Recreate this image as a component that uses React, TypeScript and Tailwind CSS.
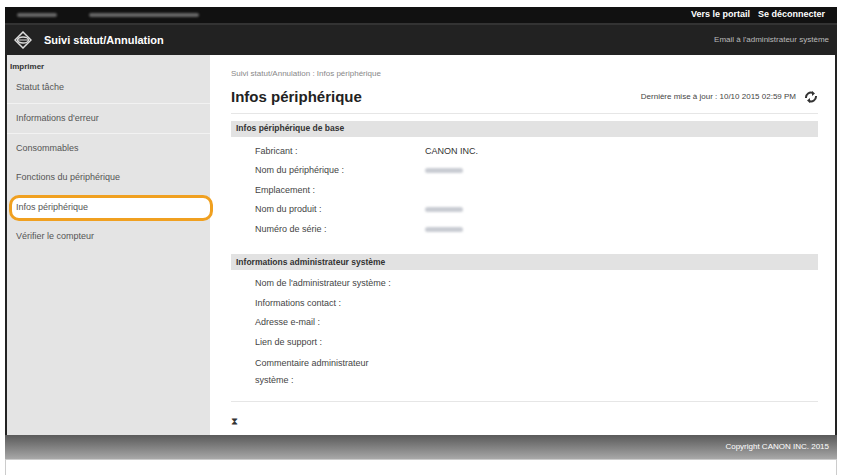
const font = { fontFamily: '"Liberation Sans", Arial, sans-serif' }

const sideItems = [
  'Statut tâche',
  "Informations d'erreur",
  'Consommables',
  'Fonctions du périphérique',
  'Infos périphérique',
  'Vérifier le compteur',
]

function Row({ label, value, blur }: { label: string; value?: string; blur?: boolean }) {
  return (
    <div className="flex h-[19.5px] items-center pl-6 text-[9px] text-[#444]">
      <div className="w-[170px]">{label}</div>
      {value && <div className="text-[#333]">{value}</div>}
      {blur && <div className="h-[5px] w-[38px] rounded bg-[#c9ccd3] blur-[1px]" />}
    </div>
  )
}

function Logo() {
  return (
    <svg width="18" height="18" viewBox="0 0 18 18">
      <path d="M9 1 L17 9 L9 17 L1 9 Z" fill="none" stroke="#ddd" strokeWidth="1.5" />
      <ellipse cx="9" cy="9" rx="5.5" ry="3" fill="none" stroke="#ddd" strokeWidth="1.3" />
      <path d="M4 9 H14" stroke="#ddd" strokeWidth="1" />
    </svg>
  )
}

export default function App() {
  return (
    <div style={font} className="h-[475px] w-[842px] bg-white pt-[7px]">
      <div className="mx-[5px] flex h-[468px] flex-col">
        <div className="flex h-[16px] items-center justify-between bg-[#111] px-3">
          <div className="flex gap-8">
            <div className="h-[4px] w-[40px] rounded bg-[#666] blur-[1px]" />
            <div className="h-[4px] w-[110px] rounded bg-[#666] blur-[1px]" />
          </div>
          <div className="flex gap-2 text-[9px] font-bold text-white">
            <span>Vers le portail</span>
            <span>Se déconnecter</span>
          </div>
        </div>
        <div className="flex h-[32px] items-center justify-between border-t-2 border-[#333] bg-[#222] pl-[9px] pr-2">
          <div className="flex items-center gap-3">
            <Logo />
            <span className="text-[11px] font-bold text-white">Suivi statut/Annulation</span>
          </div>
          <span className="text-[8px] text-[#bbb]">Email à l'administrateur système</span>
        </div>
        <div className="flex h-[380px] border-l-2 border-r-2 border-[#222]">
          <div className="w-[203px] bg-[#e4e4e4] pt-[6px]">
            <div className="pl-[3px] text-[8px] font-bold text-[#333]">Imprimer</div>
            {sideItems.map((s, i) => (
              <div key={s} className={`relative flex items-center pl-[9px] text-[9px] text-[#555] ${i === 0 ? 'h-[31px]' : 'h-[29.5px]'} ${i < 2 ? 'border-b border-[#f2f2f2]' : ''}`}>
                {i === 4 && <div className="absolute left-[2px] right-[-3px] top-[2px] bottom-[1px] rounded-[10px] border-[3px] border-[#f0a020] bg-white" />}
                <span className="relative">{s}</span>
              </div>
            ))}
          </div>
          <div className="flex-1 bg-white pl-[21px] pr-[17px] pt-[13px]">
            <div className="text-[8px] text-[#888]">Suivi statut/Annulation : Infos périphérique</div>
            <div className="flex items-center justify-between border-b border-[#e6e6e6] pb-[4px] pt-[6px]">
              <span className="text-[15px] font-bold text-[#222]">Infos périphérique</span>
              <div className="flex items-center gap-2 text-[8px] text-[#444]">
                <span>Dernière mise à jour : 10/10 2015 02:59 PM</span>
                <svg width="14" height="12" viewBox="0 0 14 12">
                  <path d="M2 7 A5 5 0 0 1 9 2" fill="none" stroke="#333" strokeWidth="2" />
                  <path d="M8 0 L11 2.5 L8 5 Z" fill="#333" />
                  <path d="M12 5 A5 5 0 0 1 5 10" fill="none" stroke="#333" strokeWidth="2" />
                  <path d="M6 7 L3 9.5 L6 12 Z" fill="#333" />
                </svg>
              </div>
            </div>
            <div className="mt-[7px] flex h-[16px] items-center bg-[#e2e2e2] pl-[5px] text-[8.5px] font-bold text-[#333]">Infos périphérique de base</div>
            <div className="pt-[5px]">
              <Row label="Fabricant :" value="CANON INC." />
              <Row label="Nom du périphérique :" blur />
              <Row label="Emplacement :" />
              <Row label="Nom du produit :" blur />
              <Row label="Numéro de série :" blur />
            </div>
            <div className="mt-[15px] flex h-[16px] items-center bg-[#e2e2e2] pl-[5px] text-[8.5px] font-bold text-[#333]">Informations administrateur système</div>
            <div className="pt-[4px]">
              <Row label="Nom de l'administrateur système :" />
              <Row label="Informations contact :" />
              <Row label="Adresse e-mail :" />
              <Row label="Lien de support :" />
              <div className="pl-6 pt-[3px] text-[9px] leading-[17px] text-[#444]">Commentaire administrateur<br />système :</div>
            </div>
            <div className="mt-[12px] border-t border-[#e6e6e6] pt-[12px] text-[10px] text-[#333]">⧗</div>
          </div>
        </div>
        <div className="flex h-[24px] items-center justify-end bg-gradient-to-b from-[#5a5a5a] to-[#a8a8a8] pr-2 text-[8px] text-white">Copyright CANON INC. 2015</div>
        <div className="flex-1 border-x border-t border-[#ccc] bg-white" />
      </div>
    </div>
  )
}
